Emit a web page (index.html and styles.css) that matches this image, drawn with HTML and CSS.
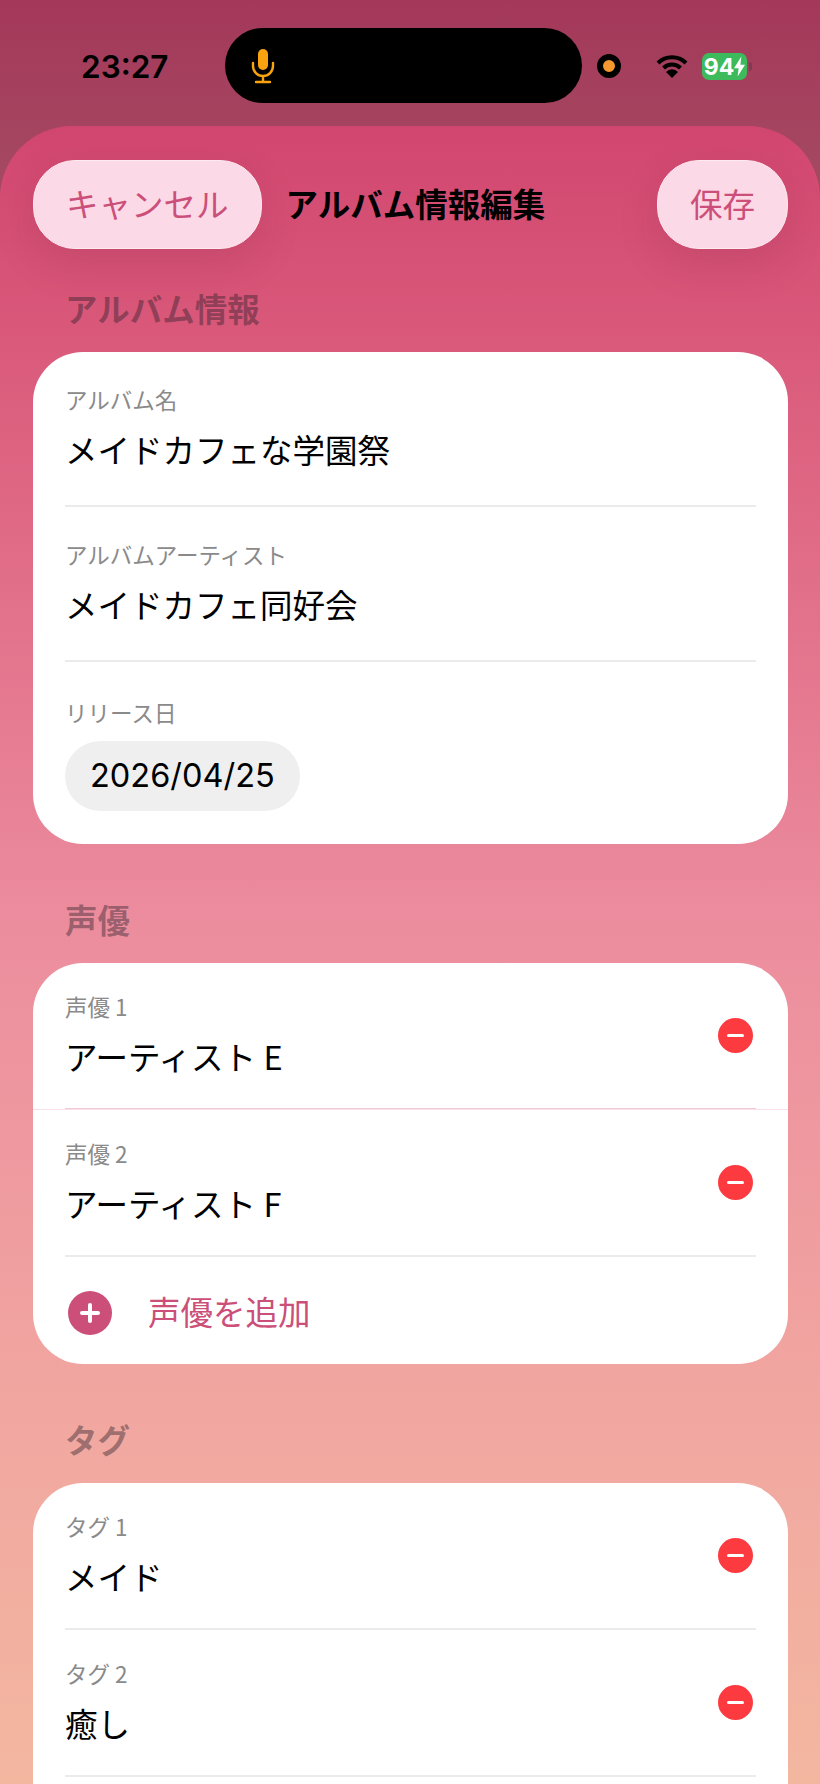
FILE: index.html
```html
<!DOCTYPE html>
<html lang="ja">
<head>
  <meta charset="UTF-8" />
  <meta name="viewport" content="width=device-width, initial-scale=1.0"/>
  <title>アルバム情報編集</title>
  <link rel="stylesheet" href="styles.css">
</head>
<body>
  <div class="status-bar">
    <span class="time">23:27</span>
    <div class="island">
      <svg class="mic" viewBox="0 0 24 36" width="24" height="36">
        <rect x="7" y="1" width="10" height="21" rx="5" fill="#f9a30f"/>
        <path d="M2 15v3a10 10 0 0 0 20 0v-3M12 28v6M5 34h14" fill="none" stroke="#f9a30f" stroke-width="2.4" stroke-linecap="round"/>
      </svg>
    </div>
    <span class="rec-dot"></span>
    <svg class="wifi" viewBox="0 0 32 26" width="32" height="26">
      <path d="M2 10a20 20 0 0 1 28 0M7.500 15a12 12 0 0 1 17 0" fill="none" stroke="#000" stroke-width="4"/>
      <path d="M16 25l-6-6a8 8 0 0 1 12 0z" fill="#000"/>
    </svg>
    <div class="battery">
      <span>94</span>
      <svg viewBox="0 0 12 22" width="11" height="21"><path d="M8 0L0 13h5l-1 9 8-13H7z" fill="#fff"/></svg>
    </div>
    <span class="battery-tip"></span>
  </div>

  <main class="sheet">
    <header class="topbar">
      <button class="pill-btn">キャンセル</button>
      <h1>アルバム情報編集</h1>
      <button class="pill-btn">保存</button>
    </header>

    <h2>アルバム情報</h2>
    <section class="card">
      <div class="row row-tall">
        <div class="field">
          <label>アルバム名</label>
          <p>メイドカフェな学園祭</p>
        </div>
      </div>
      <div class="row row-tall">
        <div class="field">
          <label>アルバムアーティスト</label>
          <p>メイドカフェ同好会</p>
        </div>
      </div>
      <div class="date-row">
        <label>リリース日</label>
        <span class="date-pill">2026/04/25</span>
      </div>
    </section>

    <h2>声優</h2>
    <section class="card">
      <div class="row row-pink">
        <div class="field">
          <label>声優 1</label>
          <p>アーティスト E</p>
        </div>
        <span class="remove"></span>
      </div>
      <div class="seam"></div>
      <div class="row">
        <div class="field">
          <label>声優 2</label>
          <p>アーティスト F</p>
        </div>
        <span class="remove"></span>
      </div>
      <div class="add-row">
        <span class="add-icon"></span>
        <span>声優を追加</span>
      </div>
    </section>

    <h2>タグ</h2>
    <section class="card card-open">
      <div class="row">
        <div class="field">
          <label>タグ 1</label>
          <p>メイド</p>
        </div>
        <span class="remove"></span>
      </div>
      <div class="row">
        <div class="field">
          <label>タグ 2</label>
          <p>癒し</p>
        </div>
        <span class="remove"></span>
      </div>
    </section>
  </main>
</body>
</html>
```

FILE: styles.css
```css
:root {
  --accent: #cb4f79;
  --pill: #fcd9e6;
  --danger: #fd3a40;
  --divider: #ebebeb;
  --label: #8a8a8a;
}

* {
  margin: 0;
  padding: 0;
  box-sizing: border-box;
}

body {
  width: 820px;
  height: 1784px;
  overflow: hidden;
  font-family: "Noto Sans CJK JP", "Noto Sans", sans-serif;
  color: #000;
  background: linear-gradient(180deg, #a4385a 0, #a54b62 200px);
}

/* status bar */
.status-bar {
  height: 126px;
  display: flex;
  align-items: flex-start;
  padding: 28px 0 0 81px;
}

.time {
  width: 144px;
  margin-top: 19px;
  font-family: Inter, sans-serif;
  font-size: 31.500px;
  line-height: 40px;
  font-weight: 600;
}

.island {
  width: 357px;
  height: 75px;
  border-radius: 38px;
  background: #000;
  display: flex;
  align-items: center;
  padding-left: 26px;
}

.rec-dot {
  width: 24px;
  height: 24px;
  margin: 26px 0 0 15px;
  border-radius: 50%;
  background: #f7982f;
  border: 6px solid #000;
}

.wifi {
  margin: 25px 0 0 35px;
}

.battery {
  width: 45px;
  height: 27px;
  margin: 25px 0 0 14px;
  border-radius: 7px;
  background: #3dbb5c;
  color: #fff;
  display: flex;
  align-items: center;
  justify-content: center;
  font-family: Inter, sans-serif;
  font-size: 23px;
  font-weight: 700;
}

.battery-tip {
  width: 3px;
  height: 9px;
  margin: 34px 0 0 2px;
  border-radius: 0 3px 3px 0;
  background: #7f3b50;
}

/* sheet */
.sheet {
  height: 1658px;
  padding: 34px 32px 0 33px;
  border-radius: 72px 72px 0 0;
  background: linear-gradient(180deg, #d1466f 0, #da5a7b 220px, #ec8d9e 800px, #f1a6a0 1270px, #f3b7a0 1658px);
}

.topbar {
  height: 89px;
  display: flex;
  align-items: center;
  justify-content: space-between;
}

h1 {
  flex: 1;
  padding: 0 0 3px 24px;
  font-size: 32.500px;
  line-height: 44px;
  font-weight: 700;
}

.pill-btn {
  height: 89px;
  padding: 0 32px 4px;
  border: 1px solid #fdeaf1;
  border-radius: 42px;
  background: var(--pill);
  color: var(--accent);
  font-family: inherit;
  font-size: 32.500px;
  box-shadow: 0 16px 40px rgba(120, 30, 60, 0.16);
}

h2 {
  margin: 53px 0 22px 32px;
  font-size: 32.500px;
  line-height: 44px;
  font-weight: 700;
  color: rgba(40, 30, 40, 0.42);
}

.topbar + h2 {
  margin-top: 37px;
}

.card {
  padding: 0 32px;
  border-radius: 50px;
  background: #fff;
  overflow: hidden;
}

/* last card runs on past the bottom of the page */
.card-open {
  padding-bottom: 80px;
}

.row {
  height: 147px;
  display: flex;
  align-items: center;
  justify-content: space-between;
  padding-right: 3px;
  border-bottom: 2px solid var(--divider);
}

.row-tall {
  height: 155px;
}

.row-pink {
  border-bottom-color: #efc9d5;
}

.seam {
  height: 1px;
  margin: -1px -32px 0;
  background: #fbe0e8;
}

.field {
  padding-bottom: 4px;
}

.field label,
.date-row label {
  display: block;
  font-size: 22.500px;
  line-height: 32px;
  color: var(--label);
}

.field p {
  margin-top: 12px;
  font-size: 32.500px;
  line-height: 44px;
}

.remove {
  width: 35px;
  height: 35px;
  border-radius: 50%;
  background: var(--danger);
  display: flex;
  align-items: center;
  justify-content: center;
}

.remove::before {
  content: "";
  width: 17px;
  height: 3px;
  border-radius: 2px;
  background: #fff;
}

.date-row {
  height: 182px;
  padding-top: 34px;
}

.date-pill {
  display: inline-block;
  margin-top: 13px;
  height: 70px;
  padding: 0 25px;
  border-radius: 35px;
  background: #efefef;
  font-family: Inter, sans-serif;
  font-size: 32.500px;
  line-height: 70px;
}

.add-row {
  height: 107px;
  display: flex;
  align-items: center;
  gap: 36px;
  padding: 4px 0 0 3px;
  color: var(--accent);
  font-size: 32.500px;
}

.add-row span:last-child {
  padding-bottom: 4px;
}

.add-icon {
  position: relative;
  width: 44px;
  height: 44px;
  border-radius: 50%;
  background: var(--accent);
}

.add-icon::before,
.add-icon::after {
  content: "";
  position: absolute;
  background: #fff;
  border-radius: 2px;
}

.add-icon::before {
  left: 12px;
  top: 20px;
  width: 20px;
  height: 4px;
}

.add-icon::after {
  left: 20px;
  top: 12px;
  width: 4px;
  height: 20px;
}
```
